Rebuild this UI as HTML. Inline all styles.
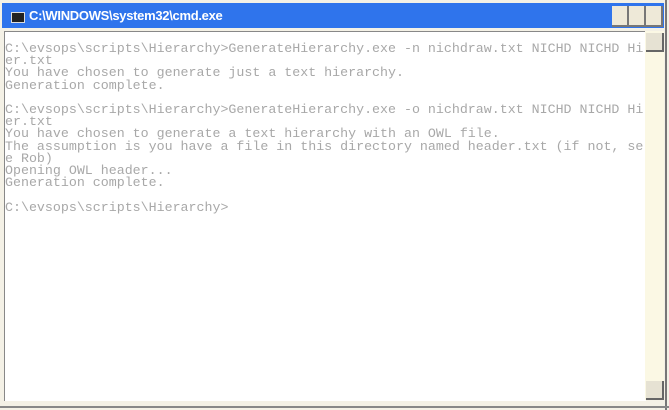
<!DOCTYPE html>
<html><head><style>
body{margin:0;width:669px;height:410px;overflow:hidden;background:#f4f1e6;position:relative;font-family:"Liberation Sans",sans-serif}
.title{position:absolute;left:2px;top:3px;width:662px;height:25px;background:#2f74ec}
.title span{position:absolute;left:27px;top:5px;color:#fff;font-weight:bold;font-size:13px;letter-spacing:-0.3px}
.ico{position:absolute;left:9px;top:9px;width:12px;height:9px;background:#222;border:1px solid #ddd}
.btn{position:absolute;top:6px;width:15px;height:19px;background:#eee9d8;border-right:2px solid #777;border-bottom:2px solid #777}
.client{position:absolute;left:4px;top:31px;width:641px;height:369px;background:#fff;border-top:1px solid #888;border-left:1px solid #888}
.sb{position:absolute;left:645px;top:31px;width:19px;height:369px;background:#fbf8e4}
.sbb{position:absolute;left:646px;width:16px;height:17px;background:#e6e2d3;border-right:2px solid #666;border-bottom:2px solid #666}
pre{position:absolute;left:5px;top:43px;margin:0;font-family:"Liberation Mono",monospace;font-size:13.3px;line-height:12.2px;color:#a8a8a8}
.edge{position:absolute;right:2px;top:0;width:2px;height:410px;background:#777}
.bot{position:absolute;left:0;bottom:2px;width:669px;height:2px;background:#888}
</style></head><body>
<div class="title"><div class="ico"></div><span>C:\WINDOWS\system32\cmd.exe</span></div>
<div class="btn" style="left:612px"></div>
<div class="btn" style="left:629px"></div>
<div class="btn" style="left:646px"></div>
<div class="client"></div>
<div class="sb"></div>
<div class="sbb" style="top:33px"></div>
<div class="sbb" style="top:381px"></div>
<div class="edge"></div><div class="bot"></div>
<pre>C:\evsops\scripts\Hierarchy&gt;GenerateHierarchy.exe -n nichdraw.txt NICHD NICHD Hi
er.txt
You have chosen to generate just a text hierarchy.
Generation complete.

C:\evsops\scripts\Hierarchy&gt;GenerateHierarchy.exe -o nichdraw.txt NICHD NICHD Hi
er.txt
You have chosen to generate a text hierarchy with an OWL file.
The assumption is you have a file in this directory named header.txt (if not, se
e Rob)
Opening OWL header...
Generation complete.

C:\evsops\scripts\Hierarchy&gt;</pre>
</body></html>
